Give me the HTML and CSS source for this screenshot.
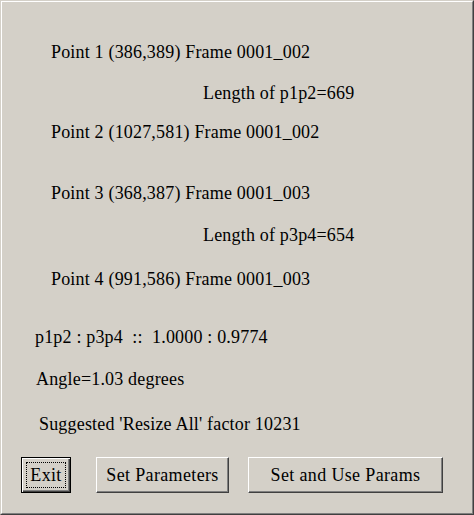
FILE: index.html
```html
<!DOCTYPE html>
<html>
<head>
    <title>Resize Points</title>
    <link rel="stylesheet" href="styles.css">
</head>
<body>
    <div class="window">
        <div class="lines">
            <div class="line point l1">Point 1 (386,389) Frame 0001_002</div>
            <div class="line length l2">Length of p1p2=669</div>
            <div class="line point l3">Point 2 (1027,581) Frame 0001_002</div>
            <div class="line point l4">Point 3 (368,387) Frame 0001_003</div>
            <div class="line length l5">Length of p3p4=654</div>
            <div class="line point l6">Point 4 (991,586) Frame 0001_003</div>
            <div class="line ratio l7">p1p2 : p3p4 &nbsp;:: &nbsp;1.0000 : 0.9774</div>
            <div class="line angle l8">Angle=1.03 degrees</div>
            <div class="line factor l9">Suggested 'Resize All' factor 10231</div>
        </div>
        <div class="buttons">
            <button class="btn btn-default"><span class="focus">Exit</span></button>
            <button class="btn btn-params">Set Parameters</button>
            <button class="btn btn-use">Set and Use Params</button>
        </div>
    </div>
</body>
</html>
```

FILE: styles.css
```css
body {
    margin: 0;
    font-family: "Liberation Serif", "Times New Roman", serif;
    background-color: #d4d0c8;
}
.window {
    width: 474px;
    height: 515px;
    box-sizing: border-box;
    background-color: #d4d0c8;
    border-top: 1px solid #d4d0c8;
    border-left: 1px solid #d4d0c8;
    border-right: 1px solid #404040;
    border-bottom: 1px solid #404040;
    display: flex;
    flex-direction: column;
}
.lines {
    border-top: 1px solid #ffffff;
    border-left: 1px solid #ffffff;
    border-right: 1px solid #808080;
    display: flex;
    flex-direction: column;
    padding-top: 40px;
}
.window > .buttons {
    border-left: 1px solid #ffffff;
    border-right: 1px solid #808080;
    border-bottom: 1px solid #808080;
    flex-grow: 1;
}
.line {
    font-size: 18px;
    line-height: 20px;
    height: 20px;
    color: #000;
    white-space: pre;
    letter-spacing: 0.18px;
}
.point {
    padding-left: 49px;
}
.length {
    padding-left: 201px;
}
.l2 { margin-top: 21px; }
.l3 { margin-top: 19px; }
.l4 { margin-top: 41px; }
.l5 { margin-top: 22px; }
.l6 { margin-top: 24px; }
.ratio {
    padding-left: 33px;
    margin-top: 38px;
}
.angle {
    padding-left: 34px;
    margin-top: 22px;
}
.factor {
    padding-left: 37px;
    margin-top: 25px;
}
.buttons {
    display: flex;
    align-items: flex-start;
    padding-top: 23px;
    padding-left: 19px;
}
.btn {
    font-family: "Liberation Serif", "Times New Roman", serif;
    font-size: 18px;
    letter-spacing: 0.35px;
    color: #000;
    background-color: #d4d0c8;
    height: 36px;
    padding: 0;
    margin: 0;
    box-sizing: border-box;
    border-top: 1px solid #ffffff;
    border-left: 1px solid #ffffff;
    border-right: 1px solid #404040;
    border-bottom: 1px solid #404040;
    box-shadow: inset -1px -1px 0 #808080;
}
.btn-default {
    width: 50px;
    border: 1px solid #000;
    box-shadow: inset 1px 1px 0 #ffffff, inset -1px -1px 0 #404040, inset -2px -2px 0 #808080;
    padding: 4px;
}
.focus {
    display: block;
    height: 100%;
    box-sizing: border-box;
    border: 1px dotted #000;
    line-height: 24px;
}
.btn-params {
    width: 133px;
    margin-left: 25px;
}
.btn-use {
    width: 195px;
    margin-left: 19px;
}
```
